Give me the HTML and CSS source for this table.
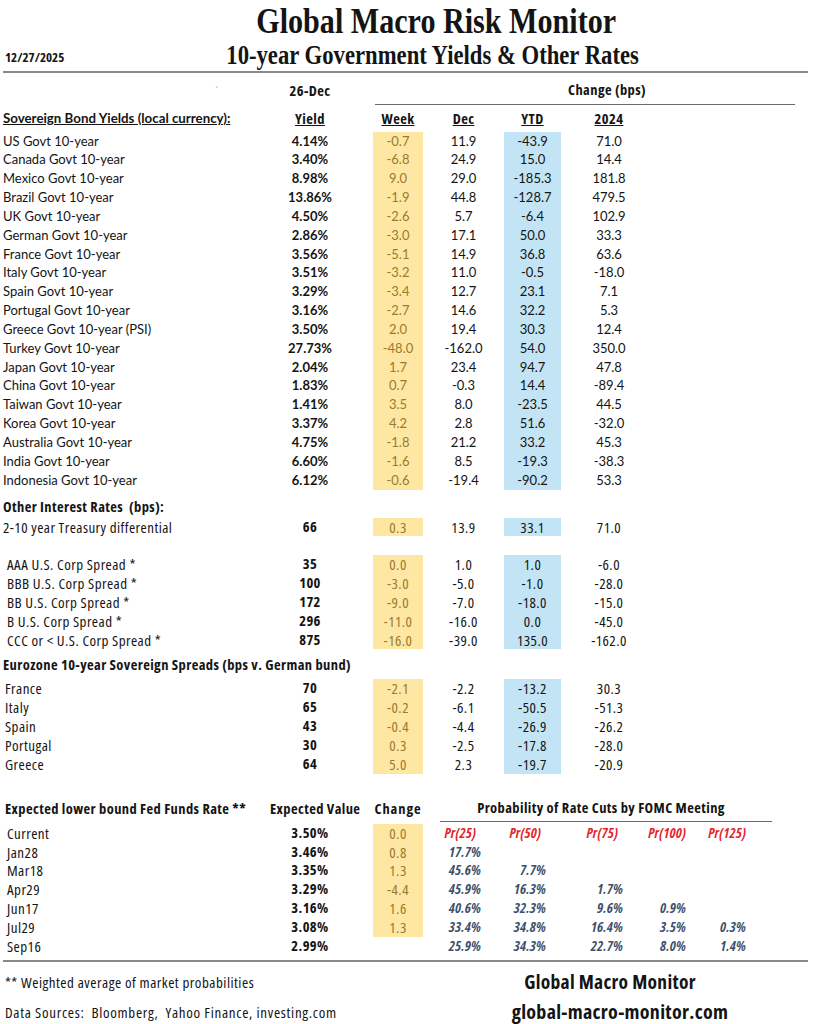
FILE: index.html
```html
<!DOCTYPE html>
<html lang="en">
<head>
<meta charset="utf-8">
<title>Global Macro Risk Monitor</title>
<link rel="stylesheet" href="styles.css">
</head>
<body>
<div class="page">
  <header class="hdr">
    <h1 class="title"><span>Global Macro Risk Monitor</span></h1>
    <div class="subrow">
      <div class="date">12/27/2025</div>
      <h2 class="subtitle"><span>10-year Government Yields &amp; Other Rates</span></h2>
    </div>
  </header>

  <section class="sov">
    <div class="row head1">
      <div class="c tick">`</div>
      <div class="c val nb">26-Dec</div>
      <div class="c chg nb">Change (bps)</div>
    </div>
    <div class="row head2">
      <div class="c lbl shd">Sovereign Bond Yields (local currency):</div>
      <div class="c val nb u">Yield</div>
      <div class="c wkh nb u">Week</div>
      <div class="c dec nb u">Dec</div>
      <div class="c ytdh nb u">YTD</div>
      <div class="c y24 nb u">2024</div>
    </div>
    <div class="row d"><div class="c lbl">US Govt 10-year</div><div class="c val b">4.14%</div><div class="c wk">-0.7</div><div class="c dec">11.9</div><div class="c ytd">-43.9</div><div class="c y24">71.0</div></div>
    <div class="row d"><div class="c lbl">Canada Govt 10-year</div><div class="c val b">3.40%</div><div class="c wk">-6.8</div><div class="c dec">24.9</div><div class="c ytd">15.0</div><div class="c y24">14.4</div></div>
    <div class="row d"><div class="c lbl">Mexico Govt 10-year</div><div class="c val b">8.98%</div><div class="c wk">9.0</div><div class="c dec">29.0</div><div class="c ytd">-185.3</div><div class="c y24">181.8</div></div>
    <div class="row d"><div class="c lbl">Brazil Govt 10-year</div><div class="c val b">13.86%</div><div class="c wk">-1.9</div><div class="c dec">44.8</div><div class="c ytd">-128.7</div><div class="c y24">479.5</div></div>
    <div class="row d"><div class="c lbl">UK Govt 10-year</div><div class="c val b">4.50%</div><div class="c wk">-2.6</div><div class="c dec">5.7</div><div class="c ytd">-6.4</div><div class="c y24">102.9</div></div>
    <div class="row d"><div class="c lbl">German Govt 10-year</div><div class="c val b">2.86%</div><div class="c wk">-3.0</div><div class="c dec">17.1</div><div class="c ytd">50.0</div><div class="c y24">33.3</div></div>
    <div class="row d"><div class="c lbl">France Govt 10-year</div><div class="c val b">3.56%</div><div class="c wk">-5.1</div><div class="c dec">14.9</div><div class="c ytd">36.8</div><div class="c y24">63.6</div></div>
    <div class="row d"><div class="c lbl">Italy Govt 10-year</div><div class="c val b">3.51%</div><div class="c wk">-3.2</div><div class="c dec">11.0</div><div class="c ytd">-0.5</div><div class="c y24">-18.0</div></div>
    <div class="row d"><div class="c lbl">Spain Govt 10-year</div><div class="c val b">3.29%</div><div class="c wk">-3.4</div><div class="c dec">12.7</div><div class="c ytd">23.1</div><div class="c y24">7.1</div></div>
    <div class="row d"><div class="c lbl">Portugal Govt 10-year</div><div class="c val b">3.16%</div><div class="c wk">-2.7</div><div class="c dec">14.6</div><div class="c ytd">32.2</div><div class="c y24">5.3</div></div>
    <div class="row d"><div class="c lbl">Greece Govt 10-year (PSI)</div><div class="c val b">3.50%</div><div class="c wk">2.0</div><div class="c dec">19.4</div><div class="c ytd">30.3</div><div class="c y24">12.4</div></div>
    <div class="row d"><div class="c lbl">Turkey Govt 10-year</div><div class="c val b">27.73%</div><div class="c wk">-48.0</div><div class="c dec">-162.0</div><div class="c ytd">54.0</div><div class="c y24">350.0</div></div>
    <div class="row d"><div class="c lbl">Japan Govt 10-year</div><div class="c val b">2.04%</div><div class="c wk">1.7</div><div class="c dec">23.4</div><div class="c ytd">94.7</div><div class="c y24">47.8</div></div>
    <div class="row d"><div class="c lbl">China Govt 10-year</div><div class="c val b">1.83%</div><div class="c wk">0.7</div><div class="c dec">-0.3</div><div class="c ytd">14.4</div><div class="c y24">-89.4</div></div>
    <div class="row d"><div class="c lbl">Taiwan Govt 10-year</div><div class="c val b">1.41%</div><div class="c wk">3.5</div><div class="c dec">8.0</div><div class="c ytd">-23.5</div><div class="c y24">44.5</div></div>
    <div class="row d"><div class="c lbl">Korea Govt 10-year</div><div class="c val b">3.37%</div><div class="c wk">4.2</div><div class="c dec">2.8</div><div class="c ytd">51.6</div><div class="c y24">-32.0</div></div>
    <div class="row d"><div class="c lbl">Australia Govt 10-year</div><div class="c val b">4.75%</div><div class="c wk">-1.8</div><div class="c dec">21.2</div><div class="c ytd">33.2</div><div class="c y24">45.3</div></div>
    <div class="row d"><div class="c lbl">India Govt 10-year</div><div class="c val b">6.60%</div><div class="c wk">-1.6</div><div class="c dec">8.5</div><div class="c ytd">-19.3</div><div class="c y24">-38.3</div></div>
    <div class="row d"><div class="c lbl">Indonesia Govt 10-year</div><div class="c val b">6.12%</div><div class="c wk">-0.6</div><div class="c dec">-19.4</div><div class="c ytd">-90.2</div><div class="c y24">53.3</div></div>
  </section>

  <section class="other narrow">
    <div class="row sechd other-hd"><div class="c lbl nb">Other Interest Rates&nbsp; (bps):</div></div>
    <div class="row d"><div class="c lbl">2-10 year Treasury differential</div><div class="c val nb">66</div><div class="c wk">0.3</div><div class="c dec">13.9</div><div class="c ytd">33.1</div><div class="c y24">71.0</div></div>
    <div class="row d blank"></div>
    <div class="row d"><div class="c lbl ind">AAA U.S. Corp Spread *</div><div class="c val nb">35</div><div class="c wk">0.0</div><div class="c dec">1.0</div><div class="c ytd">1.0</div><div class="c y24">-6.0</div></div>
    <div class="row d"><div class="c lbl ind">BBB U.S. Corp Spread *</div><div class="c val nb">100</div><div class="c wk">-3.0</div><div class="c dec">-5.0</div><div class="c ytd">-1.0</div><div class="c y24">-28.0</div></div>
    <div class="row d"><div class="c lbl ind">BB U.S. Corp Spread *</div><div class="c val nb">172</div><div class="c wk">-9.0</div><div class="c dec">-7.0</div><div class="c ytd">-18.0</div><div class="c y24">-15.0</div></div>
    <div class="row d"><div class="c lbl ind">B U.S. Corp Spread *</div><div class="c val nb">296</div><div class="c wk">-11.0</div><div class="c dec">-16.0</div><div class="c ytd">0.0</div><div class="c y24">-45.0</div></div>
    <div class="row d"><div class="c lbl ind">CCC or &lt; U.S. Corp Spread *</div><div class="c val nb">875</div><div class="c wk">-16.0</div><div class="c dec">-39.0</div><div class="c ytd">135.0</div><div class="c y24">-162.0</div></div>
  </section>

  <section class="euro narrow">
    <div class="row sechd euro-hd"><div class="c lbl wide nb">Eurozone 10-year Sovereign Spreads (bps v. German bund)</div></div>
    <div class="row d"><div class="c lbl sm">France</div><div class="c val nb">70</div><div class="c wk">-2.1</div><div class="c dec">-2.2</div><div class="c ytd">-13.2</div><div class="c y24">30.3</div></div>
    <div class="row d"><div class="c lbl sm">Italy</div><div class="c val nb">65</div><div class="c wk">-0.2</div><div class="c dec">-6.1</div><div class="c ytd">-50.5</div><div class="c y24">-51.3</div></div>
    <div class="row d"><div class="c lbl sm">Spain</div><div class="c val nb">43</div><div class="c wk">-0.4</div><div class="c dec">-4.4</div><div class="c ytd">-26.9</div><div class="c y24">-26.2</div></div>
    <div class="row d"><div class="c lbl sm">Portugal</div><div class="c val nb">30</div><div class="c wk">0.3</div><div class="c dec">-2.5</div><div class="c ytd">-17.8</div><div class="c y24">-28.0</div></div>
    <div class="row d"><div class="c lbl sm">Greece</div><div class="c val nb">64</div><div class="c wk">5.0</div><div class="c dec">2.3</div><div class="c ytd">-19.7</div><div class="c y24">-20.9</div></div>
  </section>

  <section class="fed narrow">
    <div class="frow fed-hd">
      <div class="c lbl fhl nb">Expected lower bound Fed Funds Rate **</div>
      <div class="c val nb">Expected Value</div>
      <div class="c wkh nb">Change</div>
      <div class="c prh nb">Probability of Rate Cuts by FOMC Meeting</div>
    </div>
    <div class="frow d"><div class="c lbl ind">Current</div><div class="c val nb">3.50%</div><div class="c wk">0.0</div><div class="c sp"></div><div class="c pr pr-l">Pr(25)</div><div class="c pr pr-l">Pr(50)</div><div class="c pr pr-l">Pr(75)</div><div class="c pr">Pr(100)</div><div class="c pr">Pr(125)</div></div>
    <div class="frow d"><div class="c lbl ind">Jan28</div><div class="c val nb">3.46%</div><div class="c wk">0.8</div><div class="c sp"></div><div class="c pv">17.7%</div></div>
    <div class="frow d"><div class="c lbl ind">Mar18</div><div class="c val nb">3.35%</div><div class="c wk">1.3</div><div class="c sp"></div><div class="c pv">45.6%</div><div class="c pv">7.7%</div></div>
    <div class="frow d"><div class="c lbl ind">Apr29</div><div class="c val nb">3.29%</div><div class="c wk">-4.4</div><div class="c sp"></div><div class="c pv">45.9%</div><div class="c pv">16.3%</div><div class="c pv">1.7%</div></div>
    <div class="frow d"><div class="c lbl ind">Jun17</div><div class="c val nb">3.16%</div><div class="c wk">1.6</div><div class="c sp"></div><div class="c pv">40.6%</div><div class="c pv">32.3%</div><div class="c pv">9.6%</div><div class="c pv">0.9%</div></div>
    <div class="frow d"><div class="c lbl ind">Jul29</div><div class="c val nb">3.08%</div><div class="c wk">1.3</div><div class="c sp"></div><div class="c pv">33.4%</div><div class="c pv">34.8%</div><div class="c pv">16.4%</div><div class="c pv">3.5%</div><div class="c pv">0.3%</div></div>
    <div class="frow d"><div class="c lbl ind">Sep16</div><div class="c val nb">2.99%</div><div class="c nowk"></div><div class="c sp"></div><div class="c pv">25.9%</div><div class="c pv">34.3%</div><div class="c pv">22.7%</div><div class="c pv">8.0%</div><div class="c pv">1.4%</div></div>
  </section>

  <footer class="foot">
    <div class="fl">** Weighted average of market probabilities</div>
    <div class="fr brand">Global Macro Monitor</div>
    <div class="fl src">Data Sources:&nbsp; Bloomberg,&nbsp; Yahoo Finance, investing.com</div>
    <div class="fr site">global-macro-monitor.com</div>
  </footer>
</div>
</body>
</html>
```

FILE: styles.css
```css
* { box-sizing: border-box; }

html, body {
  margin: 0;
  padding: 0;
  background: #ffffff;
}

body {
  width: 820px;
  color: #141414;
  font-family: Lato, "Noto Sans", sans-serif;
  font-size: 13px;
}

.page {
  width: 820px;
  padding: 0 12px 0 3px;
}

/* ---------- header ---------- */
.hdr {
  border-bottom: 2px solid #8a8a8a;
  padding-bottom: 2px;
}

.title {
  margin: 0;
  height: 40px;
  padding-top: 2px;
  padding-left: 62px;
  text-align: center;
  font-family: "Liberation Serif", "Times New Roman", serif;
  font-weight: bold;
  font-size: 35px;
  line-height: 40px;
}

.title span {
  display: inline-block;
  transform: scaleX(0.86);
  transform-origin: center;
}

.subtitle span {
  display: inline-block;
  transform: scaleX(0.84);
  transform-origin: center;
}

.subrow {
  display: grid;
  grid-template-columns: 70px 1fr;
  align-items: center;
  height: 29px;
}

.date {
  padding-left: 2px;
  padding-top: 4px;
  font-family: "Open Sans", sans-serif;
  font-stretch: condensed;
  font-weight: bold;
  font-size: 13px;
}

.subtitle {
  margin: 0;
  padding-right: 15px;
  text-align: center;
  font-family: "Liberation Serif", "Times New Roman", serif;
  font-weight: bold;
  font-size: 27px;
  line-height: 30px;
}

/* ---------- shared table grid ---------- */
.row {
  display: grid;
  grid-template-columns: 267px 103px 50px 81px 57px 96px 1fr;
}

.c {
  white-space: nowrap;
}

.d {
  height: 18.85px;
  line-height: 18.85px;
}

.lbl { grid-column: 1; }
.val { grid-column: 2; text-align: center; padding-right: 23px; }
.wk, .wkh { grid-column: 3; text-align: center; }
.dec { grid-column: 4; text-align: center; }
.ytd, .ytdh { grid-column: 5; text-align: center; }
.y24 { grid-column: 6; text-align: center; }

.wk {
  background: #fde7a3;
  color: #9b7a2c;
}

.ytd {
  background: #c3e4f5;
}

.b { font-weight: bold; }

/* condensed bold (Aptos Narrow look) */
.nb {
  font-family: "Open Sans", sans-serif;
  font-stretch: condensed;
  font-weight: bold;
  font-size: 14.5px;
  letter-spacing: 0.4px;
}

.u { text-decoration: underline; }

/* header rows of first table */
.head1 {
  height: 32px;
  align-items: end;
}

.head1 .c {
  line-height: 15px;
  padding-bottom: 7px;
}

.tick {
  padding-left: 212px;
  color: #9a9a9a;
  font-size: 10px;
}

.chg {
  grid-column: 3 / -1;
  margin: 0 13px 0 2px;
  padding-left: 44px;
  text-align: center;
  border-bottom: 1px solid #6a6a6a;
}

.head2 {
  height: 26.5px;
  align-items: center;
}

.shd {
  font-weight: bold;
  font-size: 13.3px;
  text-decoration: underline;
}

/* ---------- narrow sections ---------- */
.narrow .d {
  font-family: "Open Sans", sans-serif;
  font-stretch: condensed;
  font-size: 15px;
  letter-spacing: 0.45px;
}

.narrow .d .nb {
  font-size: 14.5px;
  letter-spacing: 0.4px;
}

.sechd .lbl.wide {
  grid-column: 1 / -1;
}

.other-hd {
  height: 28px;
  align-items: center;
  padding-top: 6px;
}

.euro-hd {
  height: 30px;
  align-items: center;
}

.ind { padding-left: 4px; }
.sm { padding-left: 2px; }

/* ---------- fed funds section ---------- */
.frow {
  display: grid;
  grid-template-columns: 267px 103px 50px 15px 43px 65px 77px 63px 60px 1fr;
}

.fed-hd {
  height: 50px;
  align-items: end;
}

.fed-hd .c {
  line-height: 16px;
  padding-bottom: 7px;
}

.fed-hd .wkh {
  letter-spacing: 0.9px;
}

.fhl { padding-left: 2px; }

.fed-hd .prh {
  grid-column: 5 / -1;
  margin: 0 36px 2px 2px;
  padding-bottom: 5px;
  padding-right: 10px;
  text-align: center;
  border-bottom: 1px solid #6a6a6a;
}

.nowk { grid-column: 3; }

.fed .d .pr,
.fed .d .pv {
  text-align: right;
  font-family: "Open Sans", sans-serif;
  font-stretch: condensed;
  font-weight: bold;
  font-style: italic;
  letter-spacing: 0.2px;
}

.fed .d .pr {
  color: #e3262a;
  font-size: 14px;
}

.pr-l { padding-right: 5px; }

.fed .d .pv {
  color: #3e4f6c;
  font-size: 14px;
}

/* ---------- footer ---------- */
.foot {
  margin-top: 4px;
  border-top: 2px solid #8a8a8a;
  padding-top: 5px;
  display: grid;
  grid-template-columns: 507px 220px;
  grid-auto-rows: 30px;
  align-items: center;
  font-family: "Open Sans", sans-serif;
  font-stretch: condensed;
  font-size: 15px;
  letter-spacing: 0.5px;
  white-space: nowrap;
}

.fl { padding-left: 2px; }

.src { letter-spacing: 0.7px; }

.fr {
  text-align: center;
  font-weight: bold;
  letter-spacing: 0.3px;
}

.brand {
  font-size: 19.5px;
  padding-right: 20px;
}

.site { font-size: 20px; }
```
